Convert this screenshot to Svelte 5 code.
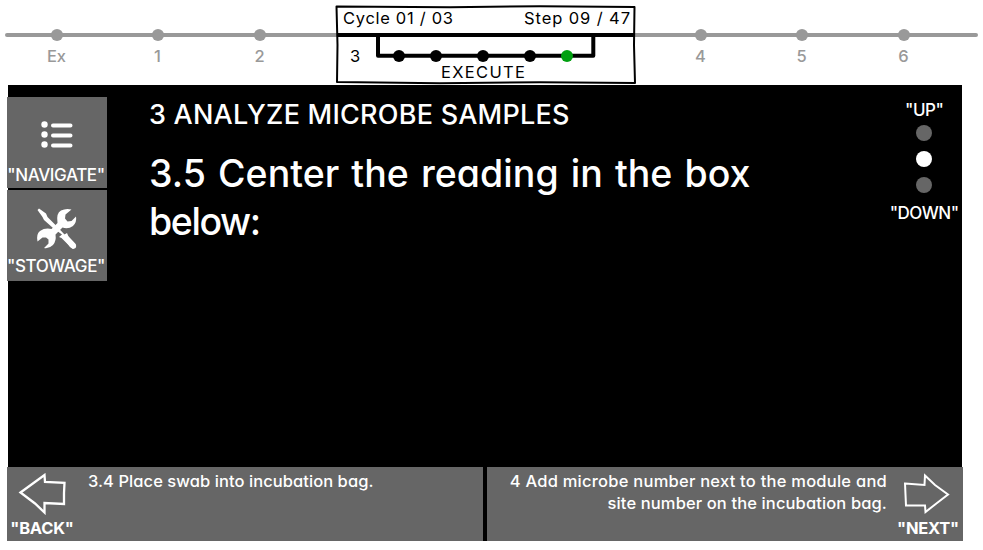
<script>
  const stops = [
    { x: 57, label: 'Ex' },
    { x: 158, label: '1' },
    { x: 260, label: '2' },
    { x: 701, label: '4' },
    { x: 802, label: '5' },
    { x: 904, label: '6' }
  ];
  const substeps = [399, 436, 483, 530, 567];
  const pages = [0, 1, 2];
  const current = 1;
</script>

<div class="screen">
  <svg class="timeline" width="983" height="85" viewBox="0 0 983 85">
    <path d="M7 35H976" stroke="#999" stroke-width="4" stroke-linecap="round" />
    {#each stops as s}
      <circle cx={s.x} cy="35" r="6.1" fill="#999" />
      <text class="stop" x={s.x - 0.5} y="62" text-anchor="middle">{s.label}</text>
    {/each}
    <path d="M336.5 6.5L450 7.2L540 6.2L634.5 7L634 45L635 83L540 82.3L440 83.2L337 82L337.5 45Z" fill="#fff" stroke="#000" stroke-width="2" stroke-linejoin="round" />
    <path d="M337 35H634" stroke="#000" stroke-width="4" />
    <path d="M378 35V55.8H593.3V35" fill="none" stroke="#000" stroke-width="4" stroke-linejoin="round" />
    {#each substeps as x, i}
      <circle cx={x} cy="56" r="6" fill={i === 4 ? '#00a010' : '#000'} />
    {/each}
    <text x="343" y="23.5" textLength="110">Cycle 01 / 03</text>
    <text x="524" y="23.5" textLength="106">Step 09 / 47</text>
    <text x="350" y="61.5">3</text>
    <text x="441" y="77.5" textLength="84">EXECUTE</text>
  </svg>

  <main>
    <div class="body">
      <nav>
        <button>
          <svg class="list" width="32" height="28" viewBox="0 0 32 28">
            <g fill="#fff"><circle cx="3.500" cy="3.500" r="3.2" /><circle cx="3.500" cy="13.500" r="3.2" /><circle cx="3.500" cy="23.500" r="3.2" /></g>
            <path d="M12 4.500H29.500M12 14.500H29.500M12 24.500H29.500" stroke="#fff" stroke-width="4" stroke-linecap="round" />
          </svg>
          <span class="navigate">"NAVIGATE"</span>
        </button>
        <button>
          <svg class="tools" width="42" height="42" viewBox="0 0 42 42">
            <path fill="#fff" d="M1.500 2L3 .5L10 5.500L11.500 9L20 17.500L28.500 26.500L31 25L32.500 28.500L39.500 36Q41 38 39.500 40Q37.500 41.500 35.500 40L25.500 30L23 29L26 26.500L17 20L8 12L6.500 9Z" />
            <path fill="#fff" d="M15.500 21L21.500 15Q20 5 25 2.500Q30 0 35.500 1.500L29.500 6.500L29 10.500L31.500 13.500L35.500 13L40 8.500Q41 14 37 18Q32 21.500 26.500 19.500L19.500 26.500Q20.500 33 17 37Q13 41 8 40L12.500 35.500L12.500 31.500L10 29.500L6.500 29.500L1.500 33.500Q0 26 4 23Q9 19.500 15.500 21Z" />
            <path fill="#fff" d="M26 28L30 26L39.500 36L40 39L37 41L34 39Z" />
          </svg>
          <span class="stowage">"STOWAGE"</span>
        </button>
      </nav>
      <section>
        <h2>3 ANALYZE MICROBE SAMPLES</h2>
        <h1>3.5 Center the reading in the box<br /><span>below:</span></h1>
      </section>
      <aside>
        <span class="up">"UP"</span>
        <div class="dots">
          {#each pages as p}<i class:active={p === current}></i>{/each}
        </div>
        <span class="down">"DOWN"</span>
      </aside>
    </div>
    <footer>
      <div class="step back">
        <div class="arrow">
          <svg width="48" height="42" viewBox="0 0 48 42">
            <path d="M2.500 19.500L26.500 2L27 9L46.500 9.800L46 20L46 31L26.500 30L26.500 39.500L17 30.500Z" fill="none" stroke="#fff" stroke-width="2.300" />
          </svg>
          <b>"BACK"</b>
        </div>
        <p>3.4 Place swab into incubation bag.</p>
      </div>
      <div class="step next">
        <p><span>4 Add microbe number next to the module and</span><br />site number on the incubation bag.</p>
        <div class="arrow">
          <svg width="48" height="42" viewBox="0 0 48 42">
            <path d="M1 10.500L20.500 12L21 2.500L31 12L44 21.500L33 30L21.500 39L21 32.500L2 32.500Z" fill="none" stroke="#fff" stroke-width="2" />
          </svg>
          <b>"NEXT"</b>
        </div>
      </div>
    </footer>
  </main>
</div>

<style>
  :global(body) { background: #fff; }
  .screen {
    width: 983px; height: 550px; overflow: hidden;
    font-family: Inter, "Liberation Sans", sans-serif;
    font-feature-settings: "cv11" 1, "calt" 0;
    font-size: 17px;
  }
  .timeline { display: block; }
  .timeline text { font-size: 16.5px; }
  .timeline .stop { fill: #999; font-weight: 500; }
  main { width: 954px; height: 456px; margin-left: 8px; background: #000; color: #fff; display: flex; flex-direction: column; }
  .body { height: 382px; display: flex; }
  nav { width: 100px; margin: 12px 0 0 -1px; display: flex; flex-direction: column; gap: 2px; }
  button {
    width: 100px; height: 91px; padding: 24px 0 0; border: 0; background: #666; color: #fff; font: inherit;
    display: flex; flex-direction: column; align-items: center; white-space: nowrap;
  }
  nav svg { flex: none; }
  button span { line-height: 20px; margin-top: 16px; margin-right: 2px; font-size: 17px; font-weight: 500; letter-spacing: -.4px; }
  .tools { margin-top: -6px; }
  .tools + span { margin-top: 6px; }
  section { width: 740px; padding: 14px 0 0 42px; white-space: nowrap; }
  h2, h1, p { margin: 0; }
  h2 { font-size: 27px; line-height: 32px; font-weight: 500; letter-spacing: .23px; }
  h1 { margin-top: 19px; font-size: 37.500px; line-height: 48px; font-weight: 500; letter-spacing: .05px; word-spacing: 2px; }
  h1 span { letter-spacing: -1.400px; }
  aside { margin-left: auto; width: 76px; padding-top: 15px; display: flex; flex-direction: column; align-items: center; line-height: 20px; font-weight: 500; }
  .up, .down { letter-spacing: -.5px; }
  .dots { display: flex; flex-direction: column; gap: 10px; margin: 5px 0 10px; }
  i { width: 16px; height: 16px; border-radius: 50%; background: #666; }
  .active { background: #fff; }
  footer { height: 74px; margin: 0 -1px; display: flex; gap: 4px; }
  .step { width: 476px; background: #666; display: flex; }
  .arrow { width: 70px; padding-top: 6px; display: flex; flex-direction: column; align-items: center; }
  b { font-size: 16.500px; letter-spacing: -.25px; line-height: 20px; font-weight: 700; margin-top: 3px; }
  p { line-height: 22px; padding-top: 3px; font-weight: 500; white-space: nowrap; font-size: 16.500px; }
  .back p { padding-left: 11px; letter-spacing: .06px; }
  .next { justify-content: flex-end; }
  .next p { text-align: right; padding-right: 6px; letter-spacing: .12px; }
  .next p span { letter-spacing: .24px; }
</style>
